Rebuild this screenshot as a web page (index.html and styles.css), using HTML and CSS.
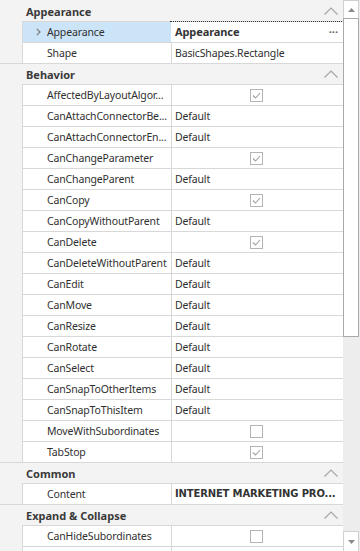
FILE: index.html
```html
<!DOCTYPE html>
<html>
<head>
<meta charset="utf-8">
<link rel="stylesheet" href="styles.css">
</head>
<body>
<div class="grid-wrap">
  <div class="grid">
    <div class="cat first"><span class="cat-title">Appearance</span><svg class="chev" width="14" height="8" viewBox="0 0 14 8"><polyline points="0.5,7.5 7,1 13.5,7.5"/></svg></div>
    <div class="row selected">
      <div class="name"><svg class="expand" width="5" height="8" viewBox="0 0 5 8"><polyline points="0.8,0.8 4,4 0.8,7.2"/></svg>Appearance</div>
      <div class="value focus"><b>Appearance</b><span class="dots">···</span></div>
    </div>
    <div class="row"><div class="name">Shape</div><div class="value">BasicShapes.Rectangle</div></div>

    <div class="cat"><span class="cat-title">Behavior</span><svg class="chev" width="14" height="8" viewBox="0 0 14 8"><polyline points="0.5,7.5 7,1 13.5,7.5"/></svg></div>
    <div class="row"><div class="name">AffectedByLayoutAlgor...</div><div class="value center"><span class="cb checked"><svg width="9" height="7" viewBox="0 0 9 7"><polyline points="1,3.5 3.5,6 8,1"/></svg></span></div></div>
    <div class="row"><div class="name">CanAttachConnectorBe...</div><div class="value">Default</div></div>
    <div class="row"><div class="name">CanAttachConnectorEn...</div><div class="value">Default</div></div>
    <div class="row"><div class="name">CanChangeParameter</div><div class="value center"><span class="cb checked"><svg width="9" height="7" viewBox="0 0 9 7"><polyline points="1,3.5 3.5,6 8,1"/></svg></span></div></div>
    <div class="row"><div class="name">CanChangeParent</div><div class="value">Default</div></div>
    <div class="row"><div class="name">CanCopy</div><div class="value center"><span class="cb checked"><svg width="9" height="7" viewBox="0 0 9 7"><polyline points="1,3.5 3.5,6 8,1"/></svg></span></div></div>
    <div class="row"><div class="name">CanCopyWithoutParent</div><div class="value">Default</div></div>
    <div class="row"><div class="name">CanDelete</div><div class="value center"><span class="cb checked"><svg width="9" height="7" viewBox="0 0 9 7"><polyline points="1,3.5 3.5,6 8,1"/></svg></span></div></div>
    <div class="row"><div class="name">CanDeleteWithoutParent</div><div class="value">Default</div></div>
    <div class="row"><div class="name">CanEdit</div><div class="value">Default</div></div>
    <div class="row"><div class="name">CanMove</div><div class="value">Default</div></div>
    <div class="row"><div class="name">CanResize</div><div class="value">Default</div></div>
    <div class="row"><div class="name">CanRotate</div><div class="value">Default</div></div>
    <div class="row"><div class="name">CanSelect</div><div class="value">Default</div></div>
    <div class="row"><div class="name">CanSnapToOtherItems</div><div class="value">Default</div></div>
    <div class="row"><div class="name">CanSnapToThisItem</div><div class="value">Default</div></div>
    <div class="row"><div class="name">MoveWithSubordinates</div><div class="value center"><span class="cb"></span></div></div>
    <div class="row"><div class="name">TabStop</div><div class="value center"><span class="cb checked"><svg width="9" height="7" viewBox="0 0 9 7"><polyline points="1,3.5 3.5,6 8,1"/></svg></span></div></div>

    <div class="cat"><span class="cat-title">Common</span><svg class="chev" width="14" height="8" viewBox="0 0 14 8"><polyline points="0.5,7.5 7,1 13.5,7.5"/></svg></div>
    <div class="row"><div class="name">Content</div><div class="value strong">INTERNET MARKETING PRO...</div></div>

    <div class="cat"><span class="cat-title">Expand &amp; Collapse</span><svg class="chev" width="14" height="8" viewBox="0 0 14 8"><polyline points="0.5,7.5 7,1 13.5,7.5"/></svg></div>
    <div class="row"><div class="name">CanHideSubordinates</div><div class="value center"><span class="cb"></span></div></div>
    <div class="row"><div class="name"></div><div class="value"></div></div>
  </div>
  <div class="scrollbar">
    <div class="sb-btn up"><svg width="7" height="4" viewBox="0 0 7 4"><polygon points="0,4 3.5,0 7,4"/></svg></div>
    <div class="sb-thumb"></div>
    <div class="sb-track"></div>
    <div class="sb-btn down"><svg width="7" height="4" viewBox="0 0 7 4"><polygon points="0,0 3.5,4 7,0"/></svg></div>
  </div>
</div>
</body>
</html>
```

FILE: styles.css
```css
html, body {
  margin: 0;
  padding: 0;
}
body {
  width: 360px;
  height: 551px;
  overflow: hidden;
  background: #f3f3f3;
  font-family: "Noto Sans", "Open Sans", sans-serif;
  font-size: 10.5px;
  letter-spacing: -0.15px;
  color: #303030;
}
.grid-wrap {
  display: flex;
  width: 360px;
  height: 551px;
}
.grid {
  width: 343px;
  display: flex;
  flex-direction: column;
  flex: none;
}
.cat {
  box-sizing: border-box;
  height: 21px;
  border-top: 1px solid #d8d8d8;
  display: flex;
  align-items: center;
  padding-left: 26px;
  padding-right: 5px;
  font-weight: bold;
  font-size: 11px;
  letter-spacing: 0;
  color: #3a3a3a;
  flex: none;
}
.cat.first {
  border-top-color: transparent;
}
.cat-title {
  flex: 1;
  white-space: nowrap;
}
.chev {
  fill: none;
  stroke: #a6a6a6;
  stroke-width: 1.2;
  margin-top: -1px;
}
.row {
  box-sizing: border-box;
  height: 21px;
  margin-left: 22px;
  border-top: 1px solid #d8d8d8;
  border-left: 1px solid #d8d8d8;
  background: #fff;
  display: flex;
  flex: none;
}
.name {
  box-sizing: border-box;
  width: 148px;
  flex: none;
  padding-left: 24px;
  padding-bottom: 1px;
  display: flex;
  align-items: center;
  white-space: nowrap;
  overflow: hidden;
  position: relative;
}
.value {
  box-sizing: border-box;
  flex: 1;
  border-left: 1px solid #d8d8d8;
  padding-left: 3px;
  padding-bottom: 1px;
  display: flex;
  align-items: center;
  white-space: nowrap;
  overflow: hidden;
}
.selected .name {
  background: #cce4f7;
}
.expand {
  position: absolute;
  left: 13px;
  top: 6px;
  fill: none;
  stroke: #7a7a7a;
  stroke-width: 1.2;
}
.value.focus {
  outline: 1px dotted #333;
  outline-offset: 0;
  border-left-color: transparent;
  padding-right: 5px;
  color: #333;
  font-size: 11px;
  letter-spacing: -0.1px;
}
.value.focus b {
  flex: 1;
}
.dots {
  color: #666;
  font-size: 11px;
  letter-spacing: 0;
  font-weight: bold;
}
.value.center {
  justify-content: center;
  padding-left: 0;
  padding-right: 2px;
  padding-bottom: 0;
}
.value.strong {
  font-family: "DejaVu Sans", sans-serif;
  font-weight: bold;
  font-size: 10px;
  letter-spacing: -0.15px;
  color: #333;
}
.cb {
  box-sizing: border-box;
  width: 13px;
  height: 13px;
  border: 1px solid #b4b4b4;
  background: #fff;
  display: flex;
  align-items: center;
  justify-content: center;
}
.cb svg {
  fill: none;
  stroke: #a0a0a0;
  stroke-width: 1.1;
}
.scrollbar {
  width: 17px;
  flex: none;
  display: flex;
  flex-direction: column;
  background: #ededed;
}
.sb-btn {
  box-sizing: border-box;
  width: 16px;
  display: flex;
  align-items: center;
  justify-content: center;
  background: #fff;
  flex: none;
}
.sb-btn svg {
  fill: #8a8a8a;
}
.sb-btn.up {
  height: 18px;
  border: 1px solid #d0d0d0;
  border-bottom: none;
}
.sb-thumb {
  box-sizing: border-box;
  width: 16px;
  height: 319px;
  border: 1px solid #a9a9a9;
  background: #fff;
  flex: none;
}
.sb-track {
  flex: 1;
}
.sb-btn.down {
  height: 20px;
  border: 1px solid #d0d0d0;
  border-bottom: none;
}
```
